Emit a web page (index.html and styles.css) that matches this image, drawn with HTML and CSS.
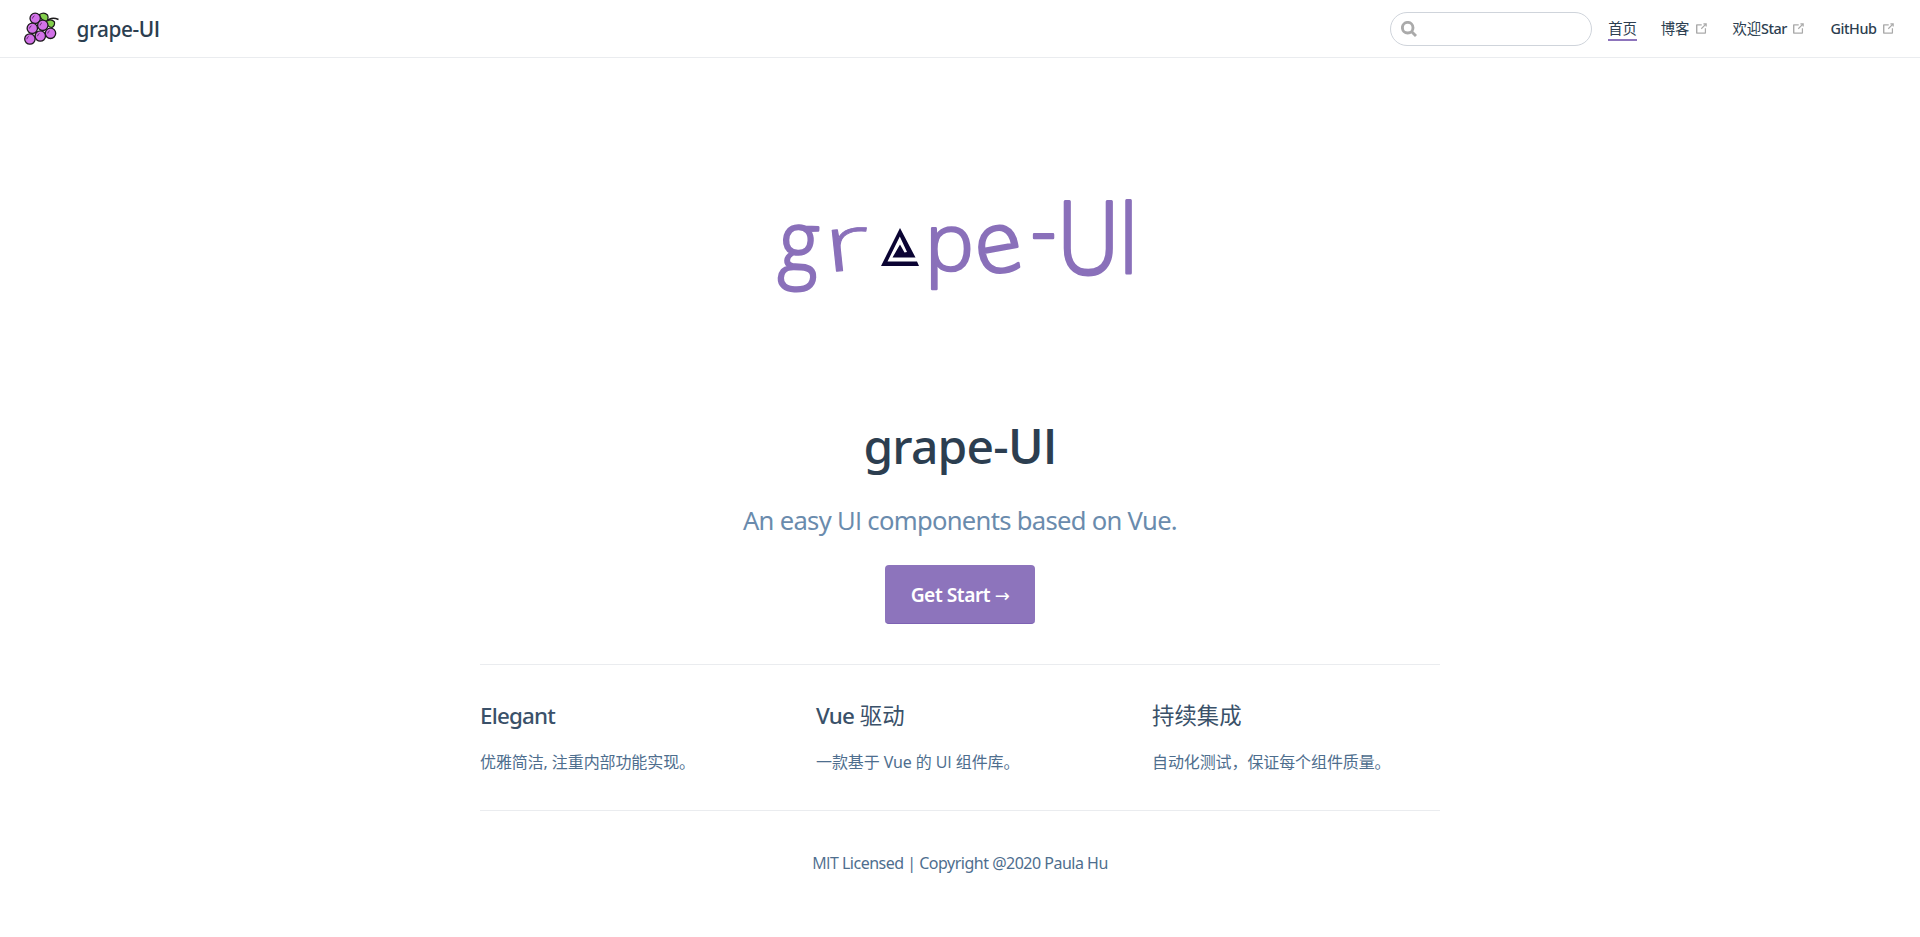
FILE: index.html
```html
<!DOCTYPE html>
<html lang="zh-CN">
<head>
<meta charset="utf-8">
<title>grape-UI</title>
<link rel="stylesheet" href="styles.css">
</head>
<body>
<svg class="defs" width="0" height="0" aria-hidden="true">
  <symbol id="outbound" viewBox="0 0 100 100">
    <path d="M18.8,85.1h56c3,0,5.4-2.4,5.4-5.4V48h-8.1v28.700H22.800V29.800h28.700v-8.100H18.800c-3,0-5.400,2.400-5.400,5.400v52.600C13.400,82.700,15.800,85.100,18.800,85.100z"/>
    <polygon points="45.700,48.700 51.300,54.300 77.200,28.500 77.200,37.200 85.200,37.200 85.200,14.900 62.800,14.900 62.800,22.900 71.500,22.900"/>
  </symbol>
</svg>
<header class="navbar">
  <a class="brand">
    <svg class="brand-logo" viewBox="0 0 36 34">
      <path class="stem" d="M22 10 Q27 4 34.500 7.500"/>
      <path class="leaf" d="M15.500 2.500 Q20 -.5 23.500 3 Q25 7 22.500 9.500 Q17 9 15.500 2.500z"/>
      <path class="leaf" d="M22 9.500 Q27 6 30.500 10 Q31 14 28 15.500 Q23 15 22 9.500z"/>
      <g class="berry">
        <circle cx="11.200" cy="6.300" r="5.200"/><circle cx="8.300" cy="16.300" r="5.200"/>
        <circle cx="18.800" cy="13.300" r="5.200"/><circle cx="26.500" cy="21.300" r="5.200"/>
        <circle cx="16.300" cy="24" r="5.200"/><circle cx="5.900" cy="27" r="5.200"/>
      </g>
      <path class="shine" d="M8.500 6.500q.2-2 2-2.700M5.500 16.500q.2-2 2-2.700M16 13.500q.2-2 2-2.700M23.700 21.500q.2-2 2-2.700M13.500 24.200q.2-2 2-2.700M2.800 27.200q.2-2 2-2.700"/>
    </svg>
    <span class="brand-name">grape-<span class="caps">UI</span></span>
  </a>
  <div class="links">
    <div class="search">
      <svg viewBox="0 0 16 16"><circle cx="6.700" cy="6.700" r="5.300"/><path d="M10.500 10.500L15 15"/></svg>
    </div>
    <nav class="nav">
      <a class="active">首页</a>
      <a>博客<svg class="out"><use href="#outbound"/></svg></a>
      <a>欢迎<b>Star</b><svg class="out"><use href="#outbound"/></svg></a>
      <a><b>GitHub</b><svg class="out"><use href="#outbound"/></svg></a>
    </nav>
  </div>
</header>
<main class="home">
  <section class="hero">
    <svg class="wordmark" viewBox="760 180 400 130">
      <g class="script">
        <text transform="translate(778 270) rotate(3) scale(.76 .84)">g</text>
        <text transform="translate(826 272) rotate(-4) skewX(2) scale(1.200 .78)" class="thin">r</text>
        <text transform="translate(925 270) scale(.82 .8)">p</text>
        <text transform="translate(979 276) rotate(-10) scale(.87 .85)">e</text>
        <text transform="translate(1031 258) scale(.78 .8)">-</text>
        <text transform="translate(1057 274) scale(.87 1.010)">U</text>
        <text transform="translate(1118.500 273) scale(.8 1.010)">I</text>
      </g>
      <path class="tri" d="M900 228L915.500 257.500H892.500L900 244.500L904.500 252.500L907 252L899.800 236.500L887.500 261.500H917L919 266H881z"/>
    </svg>
    <h1>grape-<span class="caps">UI</span></h1>
    <p class="tagline">An easy <span class="caps">UI</span> components based on Vue.</p>
    <a class="action">Get Start <span class="arrow">→</span></a>
  </section>
  <section class="features">
    <div class="feature"><h2><b>Elegant</b></h2><p>优雅简洁, 注重内部功能实现。</p></div>
    <div class="feature"><h2><b>Vue</b> 驱动</h2><p>一款基于 Vue 的 <span class="caps">UI</span> 组件库。</p></div>
    <div class="feature"><h2>持续集成</h2><p>自动化测试，保证每个组件质量。</p></div>
  </section>
  <footer class="footer"><span><span class="caps">MIT</span> Licensed | Copyright @2020 Paula Hu</span></footer>
</main>
</body>
</html>
```
FILE: styles.css
```css
* { box-sizing: border-box; }
body {
  margin: 0;
  background: #fff;
  color: #2c3e50;
  font-family: "Noto Sans", "Noto Sans CJK SC", sans-serif;
  font-size: 16px;
}
h1, h2, p { margin: 0; }
b { font-weight: 500; }
.caps { font-family: "Open Sans", sans-serif; }
.defs { display: block; }
.navbar {
  height: 58px;
  padding: 0 24px;
  display: flex;
  align-items: center;
  justify-content: space-between;
  border-bottom: 1px solid #eaecef;
}
.brand { display: flex; align-items: center; gap: 16.500px; }
.brand-logo { width: 36px; height: 34px; }
.brand-name { font-size: 20.800px; font-weight: 500; letter-spacing: -.4px; line-height: 30px; }
.stem { fill: none; stroke: #1c1a1c; stroke-width: 1.400; }
.leaf { fill: #83cf4c; stroke: #1c1a1c; stroke-width: 1.200; }
.berry { fill: #d272e8; stroke: #1c1a1c; stroke-width: 1.300; }
.shine { fill: none; stroke: #4c1d58; stroke-width: .8; }
.links { display: flex; align-items: center; gap: 16px; }
.search {
  width: 202px;
  height: 34px;
  padding: 0 10px;
  display: flex;
  align-items: center;
  border: 1px solid #cfd4db;
  border-radius: 17px;
}
.search svg { width: 16px; height: 16px; fill: none; stroke: #aaa; stroke-width: 2.900; }
.nav { display: flex; gap: 24px; font-size: 14.400px; line-height: 22px; white-space: nowrap; }
.nav a { display: flex; align-items: center; padding-top: 2px; height: 25px; border-bottom: 2px solid transparent; letter-spacing: -.2px; }
.nav b { letter-spacing: -.4px; }
.nav .active { border-color: #8d74bc; }
.out { width: 15px; height: 15px; margin-left: 4.400px; fill: #aaa; }
.home { width: 960px; margin: 0 auto; }
.hero { display: flex; flex-direction: column; align-items: center; padding-top: 122px; }
.wordmark { width: 400px; height: 130px; overflow: visible; }
.script {
  fill: #8a70ba;
  stroke: #8a70ba;
  stroke-width: 3.200;
  stroke-linejoin: round;
  font-family: "Open Sans", sans-serif;
  font-size: 100px;
  font-weight: 300;
}
.script .thin { stroke-width: 1; }
.tri { fill: #0b0433; }
.hero h1 { margin-top: 104px; font-size: 48px; line-height: 64px; font-weight: 500; letter-spacing: -.800px; }
.hero h1 .caps, .brand-name .caps { font-weight: 600; }
.tagline { margin-top: 25px; font-size: 25.600px; line-height: 36px; color: #6a8bad; letter-spacing: -.7px; }
.action {
  width: 150px;
  height: 59px;
  margin-top: 26px;
  border-radius: 4px;
  border-bottom: 1px solid #7d62b3;
  background: #8d74bc;
  color: #fff;
  font-size: 19.200px;
  font-weight: 600;
  line-height: 60px;
  letter-spacing: -.45px;
  text-align: center;
}
.arrow { font-size: 18px; line-height: 1; font-family: "DejaVu Sans", sans-serif; font-weight: 400; }
.features {
  margin-top: 40px;
  height: 146px;
  padding-top: 35px;
  display: flex;
  justify-content: space-between;
  border-top: 1px solid #eaecef;
}
.feature { width: 288px; }
.feature h2 { font-size: 22.400px; line-height: 32px; font-weight: 400; color: #3a5169; letter-spacing: 0; }
.feature h2 b { letter-spacing: -.8px; }
.feature p { margin-top: 17px; line-height: 27px; color: #4e6e8e; letter-spacing: -.1px; white-space: nowrap; }
.footer { padding-top: 40px; border-top: 1px solid #eaecef; text-align: center; line-height: 24px; color: #4e6e8e; letter-spacing: -.5px; }
```
